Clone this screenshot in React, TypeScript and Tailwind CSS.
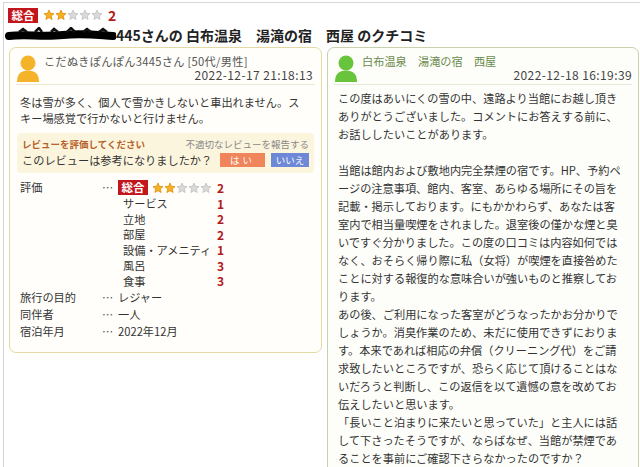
import React from "react";

const Star = ({ on }: { on: boolean }) => (
  <svg width="12" height="12" viewBox="0 0 24 24">
    <polygon
      points="12,2 14.9,8.6 22,9.3 16.6,14 18.2,21 12,17.3 5.8,21 7.4,14 2,9.3 9.1,8.6"
      fill={on ? "#f6b023" : "#d9d9d9"}
      stroke={on ? "#e08a00" : "#bdbdbd"}
      strokeWidth="1.5"
      strokeLinejoin="round"
    />
  </svg>
);

const Stars = ({ n }: { n: number }) => (
  <div className="flex items-center">
    {[0, 1, 2, 3, 4].map((i) => (
      <Star key={i} on={i < n} />
    ))}
  </div>
);

const Avatar = ({ color }: { color: string }) => (
  <svg width="24" height="28" viewBox="0 0 24 28">
    <circle cx="12" cy="9" r="7.5" fill={color} />
    <path d="M1 28 C1 20 5 16.5 12 16.5 C19 16.5 23 20 23 28 Z" fill={color} />
  </svg>
);

const Badge = () => (
  <span className="inline-block bg-[#c3161c] text-white font-bold text-[11.5px] leading-[15px] h-[15px] px-[3.5px]">
    総合
  </span>
);

const rightLines = [
  "この度はあいにくの雪の中、遠路より当館にお越し頂き",
  "ありがとうございました。コメントにお答えする前に、",
  "お話ししたいことがあります。",
  "",
  "当館は館内および敷地内完全禁煙の宿です。HP、予約ペ",
  "ージの注意事項、館内、客室、あらゆる場所にその旨を",
  "記載・掲示しております。にもかかわらず、あなたは客",
  "室内で相当量喫煙をされました。退室後の僅かな煙と臭",
  "いですぐ分かりました。この度の口コミは内容如何では",
  "なく、おそらく帰り際に私（女将）が喫煙を直接咎めた",
  "ことに対する報復的な意味合いが強いものと推察してお",
  "ります。",
  "あの後、ご利用になった客室がどうなったかお分かりで",
  "しょうか。消臭作業のため、未だに使用できずにおりま",
  "す。本来であれば相応の弁償（クリーニング代）をご請",
  "求致したいところですが、恐らく応じて頂けることはな",
  "いだろうと判断し、この返信を以て遺憾の意を改めてお",
  "伝えしたいと思います。",
  "「長いこと泊まりに来たいと思っていた」と主人には話",
  "して下さったそうですが、ならばなぜ、当館が禁煙であ",
  "ることを事前にご確認下さらなかったのですか？",
];

const subRatings: [string, number][] = [
  ["サービス", 1],
  ["立地", 2],
  ["部屋", 2],
  ["設備・アメニティ", 1],
  ["風呂", 3],
  ["食事", 3],
];

const infoRows: [string, string][] = [
  ["旅行の目的", "レジャー"],
  ["同伴者", "一人"],
  ["宿泊年月", "2022年12月"],
];

export default function App() {
  return (
    <div className="w-[640px] h-[467px] overflow-hidden bg-white font-['Noto_Sans_CJK_JP',sans-serif] text-[#333]">
      <div className="ml-[3px] mt-[2px] h-[480px] border-l border-t border-[#d6d6d6] pl-[4px] pt-[4px]">
        {/* header row 1 */}
        <div className="flex items-center h-[16px]">
          <Badge />
          <div className="ml-[5px]">
            <Stars n={2} />
          </div>
          <span className="ml-[5px] text-[14px] font-bold text-[#b01c1c] leading-[16px]">2</span>
        </div>
        {/* title */}
        <div className="flex items-center h-[15px] mt-[4px] -ml-[3px]">
          <svg width="111" height="15" viewBox="0 0 111 15">
            <path
              d="M4 9 C 20 7, 38 10, 58 8 S 92 8, 108 9"
              stroke="#000"
              strokeWidth="8"
              fill="none"
              strokeLinecap="round"
            />
            <path
              d="M14 5 L18 2 L22 5 M30 5 L34 1 L37 5 M46 5 L49 2 L53 5 M62 5 L66 1 L70 5 M78 5 L82 2 L86 5 M94 5 L98 2 L102 5"
              stroke="#111"
              strokeWidth="2.5"
              fill="none"
            />
          </svg>
          <span className="text-[14px] font-bold text-[#222] leading-[14px] whitespace-nowrap">
            445さんの 白布温泉　湯滝の宿　西屋 のクチコミ
          </span>
        </div>

        {/* cards */}
        <div className="flex gap-[5px] mt-[5px] ml-[1px] items-start">
          {/* left card */}
          <div className="w-[313px] h-[306px] rounded-[7px] border border-[#e4d9a4] bg-[#fffefa]">
            <div className="mx-[6px] pt-[6px] pb-[2px] flex border-b border-[#ede8d2]">
              <Avatar color="#f5b32a" />
              <div className="flex-1 ml-[4px]">
                <div className="text-[11.2px] leading-[14px] text-[#555] whitespace-nowrap tracking-[0.3px]">
                  こだぬきぽんぽん3445さん [50代/男性]
                </div>
                <div className="text-[12px] leading-[13px] text-[#444] text-right pr-[2px] tracking-[0.4px]">
                  2022-12-17 21:18:13
                </div>
              </div>
            </div>
            <div className="pl-[10px] mt-[9px] text-[11.2px] leading-[16px] text-[#333]">
              <div className="whitespace-nowrap">冬は雪が多く、個人で雪かきしないと車出れません。ス</div>
              <div className="whitespace-nowrap">キー場感覚で行かないと行けません。</div>
            </div>
            <div className="mx-[7px] mt-[7px] rounded-[4px] bg-[#fcf5de] px-[5px] pt-[5px] pb-[5px]">
              <div className="flex justify-between text-[9.5px] leading-[13px]">
                <span className="font-bold text-[#b5622b]">レビューを評価してください</span>
                <span className="text-[#888]">不適切なレビューを報告する</span>
              </div>
              <div className="flex items-center h-[16px] mt-[1px]">
                <span className="text-[11.2px] text-[#333] flex-1 whitespace-nowrap">
                  このレビューは参考になりましたか？
                </span>
                <span className="w-[45px] h-[14px] bg-[#f0845a] text-white text-[9.5px] leading-[14px] text-center tracking-[3px]">
                  はい
                </span>
                <span className="ml-[6px] w-[38px] h-[14px] bg-[#6e88d8] text-white text-[9.5px] leading-[14px] text-center">
                  いいえ
                </span>
              </div>
            </div>
            {/* ratings */}
            <div className="pl-[10px] mt-[6px] text-[11.2px] text-[#333]">
              <div className="flex items-center h-[17px]">
                <span className="w-[82px]">評価</span>
                <span className="w-[16px] text-[#555]">…</span>
                <Badge />
                <div className="ml-[4px]">
                  <Stars n={2} />
                </div>
                <span className="ml-[5px] font-bold text-[#b01c1c] text-[12px]">2</span>
              </div>
              {subRatings.map(([k, v]) => (
                <div key={k} className="flex items-center h-[15.5px] pl-[103px]">
                  <span className="w-[94px] whitespace-nowrap">{k}</span>
                  <span className="font-bold text-[#b01c1c] text-[12px]">{v}</span>
                </div>
              ))}
              {infoRows.map(([k, v]) => (
                <div key={k} className="flex items-center h-[17px]">
                  <span className="w-[82px]">{k}</span>
                  <span className="w-[16px] text-[#555]">…</span>
                  <span>{v}</span>
                </div>
              ))}
            </div>
          </div>

          {/* right card */}
          <div className="w-[312px] h-[440px] rounded-[7px] border border-[#c8d1ad] bg-[#fdfefa]">
            <div className="mx-[6px] pt-[6px] pb-[2px] flex border-b border-[#e6ead8]">
              <Avatar color="#68c43c" />
              <div className="flex-1 ml-[4px]">
                <div className="text-[11.2px] leading-[14px] text-[#6a8a4c] whitespace-nowrap">
                  白布温泉　湯滝の宿　西屋
                </div>
                <div className="text-[12px] leading-[13px] text-[#444] text-right tracking-[0.4px]">
                  2022-12-18 16:19:39
                </div>
              </div>
            </div>
            <div className="pl-[10px] mt-[4px] text-[11.2px] leading-[18px] text-[#333]">
              {rightLines.map((l, i) => (
                <div key={i} className="whitespace-nowrap h-[18px]">
                  {l || "\u00a0"}
                </div>
              ))}
            </div>
          </div>
        </div>
      </div>
    </div>
  );
}
